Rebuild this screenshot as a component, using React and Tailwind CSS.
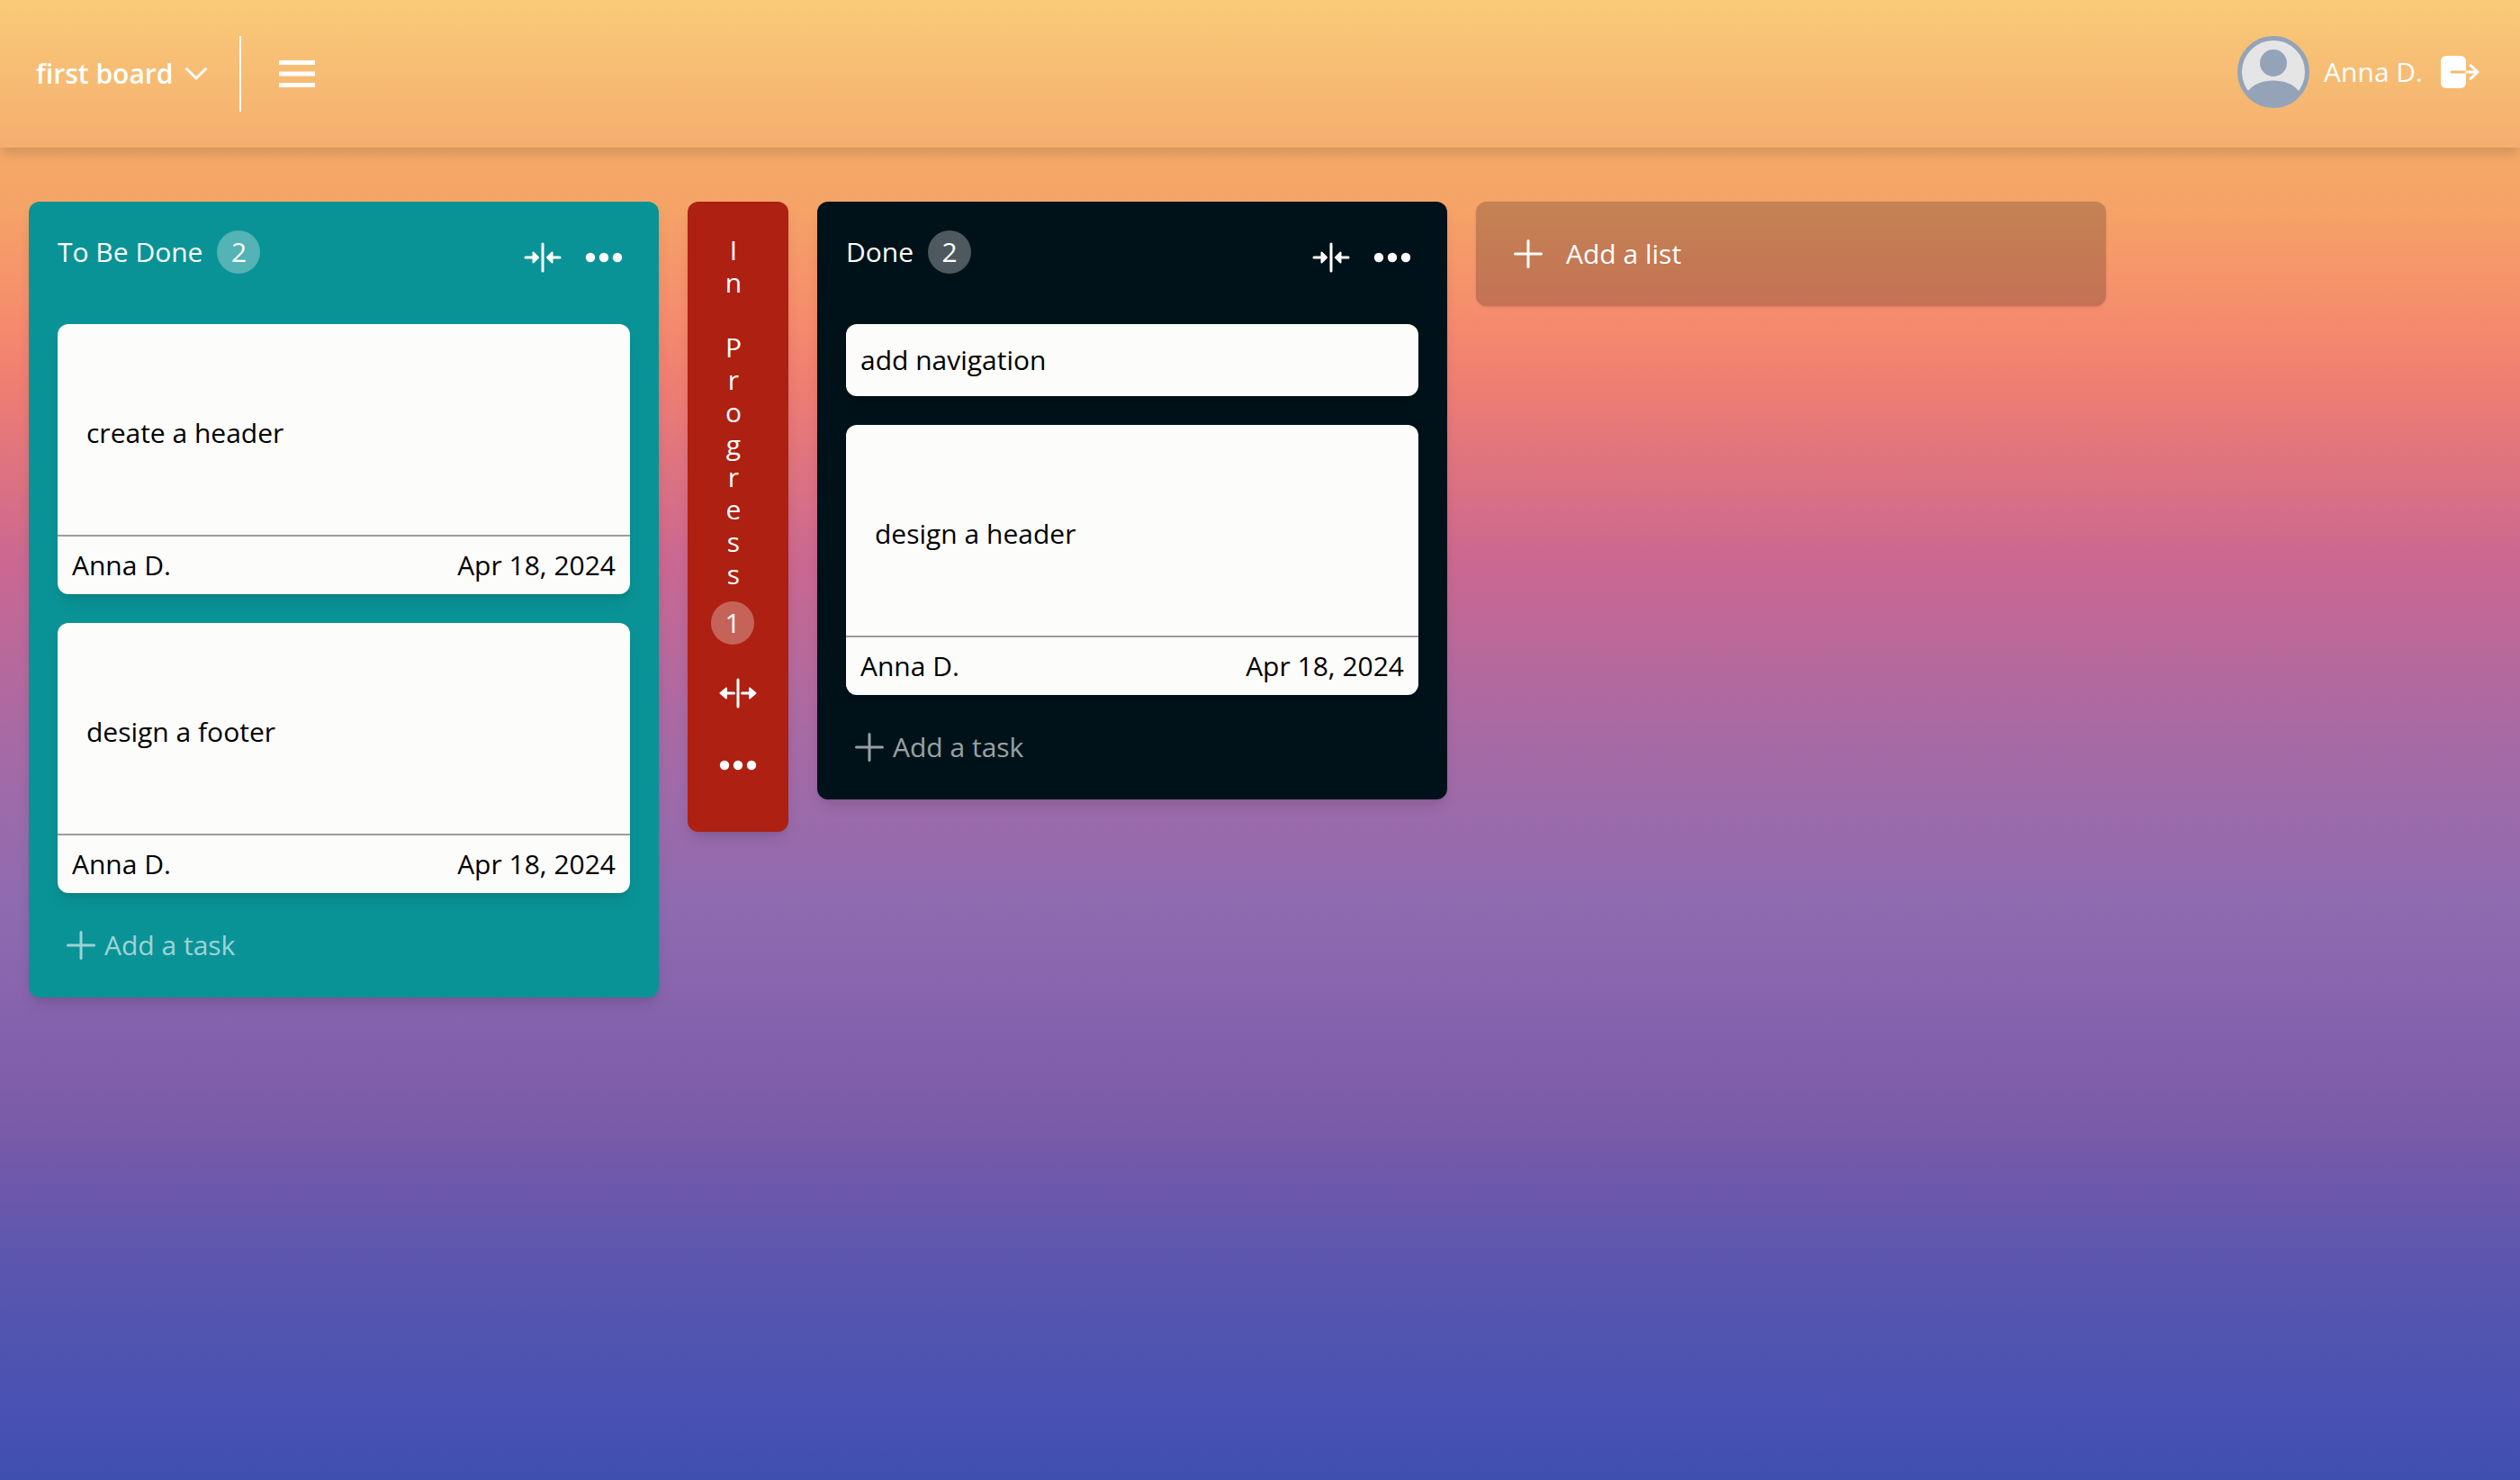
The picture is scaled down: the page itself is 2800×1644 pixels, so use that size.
const bg =
  "bg-[linear-gradient(to_bottom,#f9c871_0px,#f4a968_164px,#f5a467_225px,#f58b6d_355px,#ee7d72_430px,#cb6890_620px,#a66aa4_820px,#8f6bb0_1000px,#825fab_1180px,#765aa8_1270px,#5e56ae_1390px,#5354af_1470px,#4851b3_1575px,#3f4fb0_1644px)]";

function Plus() {
  return (
    <svg viewBox="0 0 32 32" className="size-8" fill="none" stroke="currentColor" strokeWidth="3" strokeLinecap="round" aria-hidden="true">
      <path d="M16 1.500v29M1.500 16h29" />
    </svg>
  );
}

function Collapse() {
  return (
    <svg viewBox="0 0 42 48" className="h-12 w-[42px]" fill="currentColor" stroke="currentColor" strokeLinecap="round" strokeLinejoin="round" aria-hidden="true">
      <path d="M21 9v30" strokeWidth="3" />
      <path d="M2 24h10M40 24H30" strokeWidth="3" />
      <path d="M10.500 18.500v11l5.500-5.500zM31.500 18.500v11l-5.500-5.500z" strokeWidth="2" />
    </svg>
  );
}

function Expand() {
  return (
    <svg viewBox="0 0 42 36" className="h-9 w-[42px]" fill="currentColor" stroke="currentColor" strokeLinecap="round" strokeLinejoin="round" aria-hidden="true">
      <path d="M21 3v30" strokeWidth="3" />
      <path d="M7 18h9.500M35 18h-9.500" strokeWidth="3" />
      <path d="M8 12.500v11L1.500 18zM34 12.500v11l6.500-5.500z" strokeWidth="2" />
    </svg>
  );
}

function Dots() {
  return (
    <svg viewBox="0 0 42 36" className="h-9 w-[42px]" fill="currentColor" aria-hidden="true">
      <circle cx="6" cy="18" r="5.200" />
      <circle cx="21" cy="18" r="5.200" />
      <circle cx="36" cy="18" r="5.200" />
    </svg>
  );
}

function Count({ children }) {
  return (
    <span className="flex size-12 items-center justify-center rounded-full bg-white/30">{children}</span>
  );
}

function Task({ title, author, date }) {
  if (!author) {
    return (
      <article className="rounded-xl bg-[#fcfcfa] p-4 text-black shadow-lg">
        <h3 className="leading-12">{title}</h3>
      </article>
    );
  }
  return (
    <article className="rounded-xl bg-[#fcfcfa] text-black shadow-lg">
      <h3 className="flex h-[234px] items-center px-8 pt-2">{title}</h3>
      <footer className="flex h-[66px] items-center justify-between border-t-2 border-[#9c9c9c] px-4">
        <span>{author}</span>
        <time>{date}</time>
      </footer>
    </article>
  );
}

function List({ title, tasks, color }) {
  return (
    <section className={`w-[700px] shrink-0 rounded-xl px-8 pt-8 pb-6 shadow-lg ${color}`}>
      <header className="flex h-12 items-center justify-between">
        <div className="flex items-center gap-4">
          <h2>{title}</h2>
          <Count>{tasks.length}</Count>
        </div>
        <div className="flex items-center gap-[26px] pt-3 pr-2">
          <button aria-label="Collapse list"><Collapse /></button>
          <button aria-label="List options"><Dots /></button>
        </div>
      </header>
      <div className="mt-14 flex flex-col gap-8">
        {tasks.map((t) => <Task key={t.title} {...t} />)}
      </div>
      <button className="mt-6 flex h-17 items-center gap-2.5 px-2.5 opacity-60">
        <Plus />
        <span>Add a task</span>
      </button>
    </section>
  );
}

const byAnna = { author: "Anna D.", date: "Apr 18, 2024" };

export default function App() {
  return (
    <div className={`min-h-screen font-["Open_Sans",sans-serif] text-[30px] leading-9 text-white ${bg}`}>
      <header className="flex h-41 items-center justify-between bg-white/5 px-10 shadow-[0_8px_12px_-2px_rgba(0,0,0,0.14)]">
        <div className="flex items-center">
          <button className="flex items-center gap-3.5 font-semibold">
            <span>first board</span>
            <svg viewBox="0 0 24 14" className="h-3.5 w-6" fill="none" stroke="currentColor" strokeWidth="3" strokeLinecap="round" strokeLinejoin="round" aria-hidden="true">
              <path d="M1.500 1.500L12 12 22.500 1.500" />
            </svg>
          </button>
          <div className="ml-9 h-[84px] w-0.5 bg-white" />
          <button aria-label="Menu" className="ml-10">
            <svg viewBox="0 0 44 32" className="h-8 w-11" stroke="currentColor" strokeWidth="5" aria-hidden="true">
              <path d="M2 3.500h40M2 16h40M2 28.500h40" />
            </svg>
          </button>
        </div>
        <div className="flex items-center pr-1 pb-1">
          <svg viewBox="0 0 80 80" className="size-20" role="img" aria-label="Anna D. avatar">
            <circle cx="40" cy="40" r="37.500" fill="#e5e5e5" />
            <circle cx="40" cy="30" r="15" fill="#94a3b8" />
            <path d="M11 62C18 53 28 49.500 40 49.500S62 53 69 62A37 37 0 0 1 11 62z" fill="#94a3b8" />
            <circle cx="40" cy="40" r="37.500" fill="none" stroke="#94a3b8" strokeWidth="5" />
          </svg>
          <span className="ml-4">Anna D.</span>
          <button aria-label="Log out" className="ml-5">
            <svg viewBox="0 0 44 36" className="h-9 w-11" aria-hidden="true">
              <rect width="28" height="36" rx="6" fill="currentColor" />
              <path d="M12 18h16" stroke="#f4ba70" strokeWidth="3" strokeLinecap="round" />
              <path d="M28.500 18H41M33 10.500l8 7.500-8 7.500" fill="none" stroke="currentColor" strokeWidth="3" strokeLinecap="round" strokeLinejoin="round" />
            </svg>
          </button>
        </div>
      </header>
      <main className="flex items-start gap-8 px-8 pt-15 pb-8">
        <List title="To Be Done" color="bg-[#0a9396]" tasks={[{ title: "create a header", ...byAnna }, { title: "design a footer", ...byAnna }]} />
        <section className="flex w-28 shrink-0 flex-col items-center rounded-xl bg-[#ae2012] pt-9 pb-14 shadow-lg">
          <h2 className="flex flex-col items-center pr-2.5" aria-label="In Progress">
            {[..."In Progress"].map((c, i) => <span key={i} className="h-9 whitespace-pre">{c}</span>)}
          </h2>
          <div className="mt-3 pr-3"><Count>1</Count></div>
          <button aria-label="Expand list" className="mt-9"><Expand /></button>
          <button aria-label="List options" className="mt-11"><Dots /></button>
        </section>
        <List title="Done" color="bg-[#001219]" tasks={[{ title: "add navigation" }, { title: "design a header", ...byAnna }]} />
        <button className="flex h-29 w-[700px] shrink-0 items-center gap-[26px] rounded-xl bg-black/20 px-[42px] shadow-sm">
          <Plus />
          <span>Add a list</span>
        </button>
      </main>
    </div>
  );
}
